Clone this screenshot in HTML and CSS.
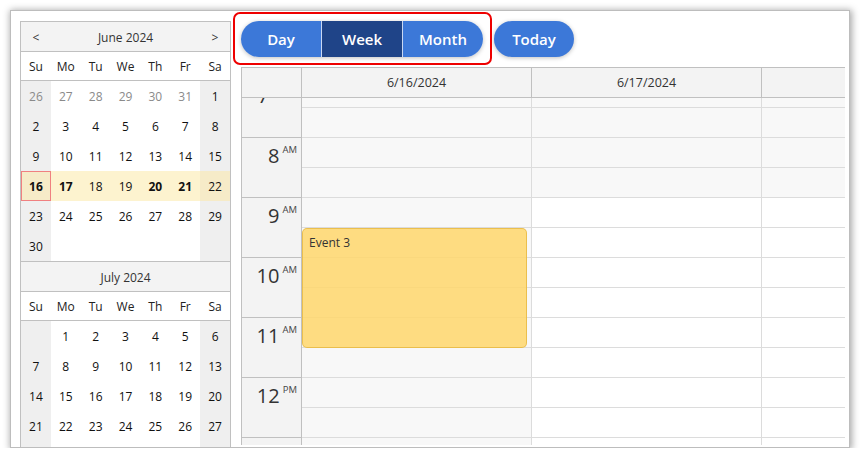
FILE: index.html
```html
<!DOCTYPE html>
<html>
<head>
<meta charset="utf-8">
<link rel="stylesheet" href="styles.css">
</head>
<body>
<div class="window">
  <div class="nav">
    <div class="month">
      <div class="m-head"><span class="arrow">&lt;</span><span class="m-title">June 2024</span><span class="arrow">&gt;</span></div>
      <div class="m-names"><span>Su</span><span>Mo</span><span>Tu</span><span>We</span><span>Th</span><span>Fr</span><span>Sa</span></div>
      <div class="m-days">
        <span class="we other">26</span><span class="other">27</span><span class="other">28</span><span class="other">29</span><span class="other">30</span><span class="other">31</span><span class="we">1</span>
        <span class="we">2</span><span>3</span><span>4</span><span>5</span><span>6</span><span>7</span><span class="we">8</span>
        <span class="we">9</span><span>10</span><span>11</span><span>12</span><span>13</span><span>14</span><span class="we">15</span>
        <span class="we sel today busy">16</span><span class="sel busy">17</span><span class="sel">18</span><span class="sel">19</span><span class="sel busy">20</span><span class="sel busy">21</span><span class="we sel">22</span>
        <span class="we">23</span><span>24</span><span>25</span><span>26</span><span>27</span><span>28</span><span class="we">29</span>
        <span class="we">30</span><span></span><span></span><span></span><span></span><span></span><span class="we"></span>
      </div>
    </div>
    <div class="month">
      <div class="m-head"><span class="arrow"></span><span class="m-title">July 2024</span><span class="arrow"></span></div>
      <div class="m-names"><span>Su</span><span>Mo</span><span>Tu</span><span>We</span><span>Th</span><span>Fr</span><span>Sa</span></div>
      <div class="m-days">
        <span class="we"></span><span>1</span><span>2</span><span>3</span><span>4</span><span>5</span><span class="we">6</span>
        <span class="we">7</span><span>8</span><span>9</span><span>10</span><span>11</span><span>12</span><span class="we">13</span>
        <span class="we">14</span><span>15</span><span>16</span><span>17</span><span>18</span><span>19</span><span class="we">20</span>
        <span class="we">21</span><span>22</span><span>23</span><span>24</span><span>25</span><span>26</span><span class="we">27</span>
        <span class="we"></span><span></span><span></span><span></span><span></span><span></span><span class="we"></span>
      </div>
    </div>
  </div>

  <div class="main">
    <div class="toolbar">
      <div class="group">
        <button class="btn">Day</button><button class="btn active">Week</button><button class="btn">Month</button>
      </div>
      <button class="btn single">Today</button>
      <div class="highlight"></div>
    </div>

    <div class="cal">
      <div class="cal-head">
        <div class="corner"></div>
        <div class="col-head">6/16/2024</div>
        <div class="col-head">6/17/2024</div>
        <div class="col-head"></div>
      </div>
      <div class="cal-body">
        <div class="scroll">
          <div class="times">
            <div class="hour"><span class="h">7</span></div>
            <div class="hour"><span class="h">8</span><span class="ap">AM</span></div>
            <div class="hour"><span class="h">9</span><span class="ap">AM</span></div>
            <div class="hour"><span class="h">10</span><span class="ap">AM</span></div>
            <div class="hour"><span class="h">11</span><span class="ap">AM</span></div>
            <div class="hour"><span class="h">12</span><span class="ap">PM</span></div>
            <div class="hour"></div>
          </div>
          <div class="day">
            <div class="c off"></div><div class="c off"></div><div class="c off"></div><div class="c off"></div>
            <div class="c off"></div><div class="c off"></div><div class="c off"></div><div class="c off"></div>
            <div class="c off"></div><div class="c off"></div><div class="c off"></div><div class="c off"></div>
            <div class="c off"></div><div class="c off"></div>
            <div class="event">Event 3</div>
          </div>
          <div class="day">
            <div class="c off"></div><div class="c off"></div><div class="c off"></div><div class="c off"></div>
            <div class="c"></div><div class="c"></div><div class="c"></div><div class="c"></div>
            <div class="c"></div><div class="c"></div><div class="c"></div><div class="c"></div>
            <div class="c"></div><div class="c"></div>
          </div>
          <div class="day">
            <div class="c off"></div><div class="c off"></div><div class="c off"></div><div class="c off"></div>
            <div class="c"></div><div class="c"></div><div class="c"></div><div class="c"></div>
            <div class="c"></div><div class="c"></div><div class="c"></div><div class="c"></div>
            <div class="c"></div><div class="c"></div>
          </div>
        </div>
      </div>
    </div>
  </div>
</div>
</body>
</html>
```

FILE: styles.css
```css
* { box-sizing: border-box; }
html, body { margin: 0; padding: 0; background: #fff; }
body {
  font-family: "Open Sans", "Noto Sans", sans-serif;
  font-size: 12px;
  color: #222;
}
.window {
  margin: 10px 0 0 10px;
  width: 840px;
  height: 438px;
  border: 1px solid #bdbdbd;
  box-shadow: 1px 1px 7px 1px rgba(0, 0, 0, 0.35);
  padding: 10px 4px 2px 9px;
  display: flex;
  gap: 10px;
  overflow: hidden;
  background: #fff;
}

/* navigator */
.nav {
  width: 211px;
  flex: none;
  border-left: 1px solid #c0c0c0;
  border-right: 1px solid #c0c0c0;
  align-self: flex-start;
}
.m-head {
  height: 31px;
  border-top: 1px solid #c0c0c0;
  border-bottom: 1px solid #c0c0c0;
  background: #f3f3f3;
  display: grid;
  grid-template-columns: 30px 1fr 30px;
  align-items: center;
  text-align: center;
  color: #333;
  padding-top: 1px;
}
.m-names {
  height: 29px;
  border-bottom: 1px solid #c0c0c0;
  display: grid;
  grid-template-columns: repeat(7, 1fr);
  align-items: center;
  text-align: center;
  color: #222;
}
.m-days {
  display: grid;
  grid-template-columns: repeat(7, 1fr);
  grid-auto-rows: 30px;
}
.m-days span {
  display: flex;
  align-items: center;
  justify-content: center;
  color: #111;
}
.m-days .we { background: #efefef; }
.m-days .other { color: #8a8a8a; }
.m-days .sel { background: #fdf3cf; }
.m-days .we.sel { background: #f6ebc8; }
.m-days .busy { font-weight: 700; }
.m-days .today { border: 1px solid #f08080; }

/* main */
.main {
  flex: 1;
  min-width: 0;
  display: flex;
  flex-direction: column;
}
.toolbar {
  position: relative;
  display: flex;
  gap: 11px;
  height: 36px;
  margin-bottom: 10px;
}
.group {
  display: flex;
  border-radius: 18px;
  overflow: hidden;
  box-shadow: 0 1px 4px rgba(0, 0, 0, 0.25);
}
.btn {
  width: 80px;
  height: 36px;
  border: none;
  margin: 0;
  padding: 0;
  background: #3c78d8;
  color: #fff;
  font-family: "Open Sans", "Noto Sans", sans-serif;
  font-size: 15px;
  font-weight: 600;
}
.group .btn + .btn { border-left: 1px solid #c9d8f3; width: 81px; }
.group .btn.active { background: #1f4488; }
.btn.single {
  border-radius: 18px;
  box-shadow: 0 1px 4px rgba(0, 0, 0, 0.25);
}
.highlight {
  position: absolute;
  left: -8px;
  top: -9px;
  width: 259px;
  height: 53px;
  border: 2.5px solid #ee0000;
  border-radius: 7px;
  pointer-events: none;
}

/* calendar */
.cal {
  flex: 1;
  min-height: 0;
  border-left: 1px solid #c0c0c0;
  border-top: 1px solid #c0c0c0;
  overflow: hidden;
  display: flex;
  flex-direction: column;
}
.cal-head {
  display: grid;
  grid-template-columns: 60px 230px 230px 230px;
  height: 30px;
  border-bottom: 1px solid #c0c0c0;
  background: #f3f3f3;
  flex: none;
}
.corner { border-right: 1px solid #c0c0c0; }
.col-head {
  border-right: 1px solid #c0c0c0;
  display: flex;
  align-items: center;
  justify-content: center;
  color: #333;
  font-size: 12.5px;
}
.cal-body {
  flex: 1;
  min-height: 0;
  overflow: hidden;
}
.scroll {
  display: grid;
  grid-template-columns: 60px 230px 230px 230px;
  margin-top: -20px;
}
.times { background: #f3f3f3; border-right: 1px solid #c0c0c0; }
.hour {
  height: 60px;
  border-bottom: 1px solid #c0c0c0;
  display: flex;
  justify-content: flex-end;
  align-items: flex-start;
  padding: 5px 4px 0 0;
  color: #333;
}
.hour:first-child { padding-right: 32px; }
.hour .h { font-size: 20px; line-height: 25px; }
.hour .ap { font-size: 9.5px; line-height: 12px; margin-left: 3px; margin-top: 1px; color: #444; }
.day {
  position: relative;
  border-right: 1px solid #dcdcdc;
}
.c {
  height: 30px;
  border-bottom: 1px solid #dcdcdc;
  background: #fff;
}
.c.off { background: #f8f8f8; }
.event {
  position: absolute;
  left: 0;
  top: 150px;
  width: 225px;
  height: 120px;
  background: rgba(255, 215, 108, 0.85);
  border: 1px solid rgba(228, 182, 60, 0.75);
  border-radius: 5px;
  padding: 5px 6px;
  color: #333;
  font-size: 12px;
}
```
